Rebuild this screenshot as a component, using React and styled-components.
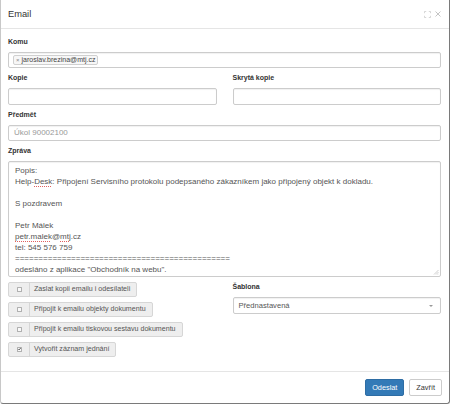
import React from "react";
import styled, { createGlobalStyle } from "styled-components";

const Global = createGlobalStyle`
  html, body { margin: 0; padding: 0; background: #fff; }
  body { font-family: "Liberation Sans", Arial, sans-serif; color: #333; }
  * { box-sizing: border-box; }
`;

const Modal = styled.div`
  width: 450px;
  height: 404px;
  background: #fff;
  border-left: 1px solid #c8c8c8;
  border-right: 1px solid #7a7a7a;
  border-bottom: 1px solid #7a7a7a;
  border-radius: 0 0 3px 3px;
  display: flex;
  flex-direction: column;
`;

const Header = styled.div`
  display: flex;
  align-items: center;
  justify-content: space-between;
  padding: 8px 8px 8px 7px;
  border-bottom: 1px solid #e5e5e5;
  height: 29px;
`;

const Title = styled.div`
  font-size: 9.3px;
  line-height: 12px;
  color: #333;
`;

const HeaderIcons = styled.div`
  display: flex;
  align-items: center;
  gap: 4px;
`;

const Body = styled.div`
  padding: 7.5px 8px 0 7px;
  flex: 1;
`;

const Group = styled.div`
  margin-bottom: 5px;
`;

const Label = styled.div`
  font-size: 7px;
  font-weight: bold;
  line-height: 10px;
  margin-bottom: 5px;
  color: #333;
`;

const Input = styled.div`
  height: 16.5px;
  border: 1px solid #ccc;
  border-radius: 2px;
  box-shadow: inset 0 1px 1px rgba(0, 0, 0, 0.06);
  display: flex;
  align-items: center;
  padding: 0 5px;
  font-size: ${(p) => p.$size || "8px"};
  color: ${(p) => p.$color || "#555"};
`;

const TagInput = styled(Input)`
  padding: 0 4px;
`;

const Tag = styled.span`
  display: inline-flex;
  align-items: center;
  height: 10px;
  border: 1px solid #d0d0d0;
  border-radius: 2px;
  background: #f7f7f7;
  padding: 0 2px;
  font-size: 7px;
  color: #444;
  gap: 2px;
`;

const TagX = styled.span`
  color: #888;
  font-size: 6px;
`;

const Row = styled.div`
  display: grid;
  grid-template-columns: 1fr 1fr;
  column-gap: 16px;
`;

const TextArea = styled.div`
  height: 116px;
  border: 1px solid #ccc;
  border-radius: 2px;
  box-shadow: inset 0 1px 1px rgba(0, 0, 0, 0.06);
  padding: 3px 6px;
  font-size: 8px;
  line-height: 11px;
  color: #555;
  position: relative;
  margin-bottom: 5px;
`;

const Line = styled.div`
  height: 11px;
  white-space: pre;
`;

const Misspelled = styled.span`
  text-decoration-line: underline;
  text-decoration-style: dotted;
  text-decoration-color: #e06060;
  text-decoration-thickness: 1px;
  text-underline-offset: 1.5px;
`;

const Grip = styled.svg`
  position: absolute;
  right: 1px;
  bottom: 1px;
`;

const Bottom = styled.div`
  display: grid;
  grid-template-columns: 1fr 1fr;
  column-gap: 16px;
`;

const Checks = styled.div`
  display: flex;
  flex-direction: column;
  align-items: flex-start;
  gap: 5.5px;
`;

const CheckBtn = styled.div`
  display: flex;
  height: 14.5px;
  border: 1px solid #d6d6d6;
  border-radius: 2px;
  background: #eee;
  font-size: 7.1px;
  color: #555;
`;

const CheckAddon = styled.span`
  width: 21px;
  display: flex;
  align-items: center;
  justify-content: center;
  border-right: 1px solid #d6d6d6;
`;

const Box = styled.span`
  width: 5px;
  height: 5px;
  border: 1px solid #b0b0b0;
  border-radius: 0.5px;
  background: #fafafa;
  display: flex;
  align-items: center;
  justify-content: center;
`;

const CheckText = styled.span`
  display: flex;
  align-items: center;
  padding: 0 6px 0 4px;
`;

const Select = styled(Input)`
  justify-content: space-between;
  height: 17px;
`;

const Caret = styled.span`
  width: 0;
  height: 0;
  border-left: 2px solid transparent;
  border-right: 2px solid transparent;
  border-top: 2px solid #999;
  margin-right: 2px;
`;

const Footer = styled.div`
  border-top: 1px solid #e5e5e5;
  display: flex;
  justify-content: flex-end;
  align-items: center;
  gap: 5px;
  padding: 7px 7px 7px 8px;
  height: 32px;
`;

const Button = styled.div`
  height: 17px;
  padding: 0 6px;
  display: flex;
  align-items: center;
  font-size: 7.3px;
  border-radius: 2px;
  border: 1px solid ${(p) => (p.$primary ? "#2e6da4" : "#ccc")};
  background: ${(p) => (p.$primary ? "#337ab7" : "#fff")};
  color: ${(p) => (p.$primary ? "#fff" : "#333")};
`;

const Check = ({ checked, children }) => (
  <CheckBtn>
    <CheckAddon>
      <Box>
        {checked && (
          <svg width="4" height="4" viewBox="0 0 4 4">
            <path d="M0.4 2 L1.5 3.2 L3.7 0.5" stroke="#333" strokeWidth="1" fill="none" />
          </svg>
        )}
      </Box>
    </CheckAddon>
    <CheckText>{children}</CheckText>
  </CheckBtn>
);

export default function App() {
  return (
    <>
      <Global />
      <Modal>
        <Header>
          <Title>Email</Title>
          <HeaderIcons>
            <svg width="7" height="7" viewBox="0 0 8 8" fill="none" stroke="#cfcfcf" strokeWidth="1">
              <path d="M0.5 2.5 V0.5 H2.5 M5.5 0.5 H7.5 V2.5 M7.5 5.5 V7.5 H5.5 M2.5 7.5 H0.5 V5.5" />
            </svg>
            <svg width="6" height="6" viewBox="0 0 6 6" stroke="#c4c4c4" strokeWidth="1">
              <path d="M0.5 0.5 L5.5 5.5 M5.5 0.5 L0.5 5.5" />
            </svg>
          </HeaderIcons>
        </Header>
        <Body>
          <Group>
            <Label>Komu</Label>
            <TagInput>
              <Tag>
                <TagX>×</TagX>jaroslav.brezina@mtj.cz
              </Tag>
            </TagInput>
          </Group>
          <Row>
            <Group>
              <Label>Kopie</Label>
              <Input />
            </Group>
            <Group>
              <Label>Skrytá kopie</Label>
              <Input />
            </Group>
          </Row>
          <Group>
            <Label>Předmět</Label>
            <Input $color="#999">Úkol 90002100</Input>
          </Group>
          <Label>Zpráva</Label>
          <TextArea>
            <Line>Popis:</Line>
            <Line>
              Help-<Misspelled>Desk</Misspelled>: Připojení Servisního protokolu podepsaného zákazníkem jako připojený objekt k dokladu.
            </Line>
            <Line> </Line>
            <Line>S pozdravem</Line>
            <Line> </Line>
            <Line>Petr Málek</Line>
            <Line>
              <Misspelled>petr.malek</Misspelled>@<Misspelled>mtj</Misspelled>.cz
            </Line>
            <Line>tel: 545 576 759</Line>
            <Line>==============================================</Line>
            <Line>odesláno z aplikace "Obchodník na webu".</Line>
            <Grip width="6" height="6" viewBox="0 0 6 6" stroke="#b0b0b0" strokeWidth="0.6">
              <path d="M5.5 1 L1 5.5 M5.5 3 L3 5.5 M5.5 4.8 L4.8 5.5" />
            </Grip>
          </TextArea>
          <Bottom>
            <Checks>
              <Check>Zaslat kopii emailu i odesílateli</Check>
              <Check>Připojit k emailu objekty dokumentu</Check>
              <Check>Připojit k emailu tiskovou sestavu dokumentu</Check>
              <Check checked>Vytvořit záznam jednání</Check>
            </Checks>
            <div>
              <Label>Šablona</Label>
              <Select $size="7.6px">
                Přednastavená
                <Caret />
              </Select>
            </div>
          </Bottom>
        </Body>
        <Footer>
          <Button $primary>Odeslat</Button>
          <Button>Zavřít</Button>
        </Footer>
      </Modal>
    </>
  );
}
